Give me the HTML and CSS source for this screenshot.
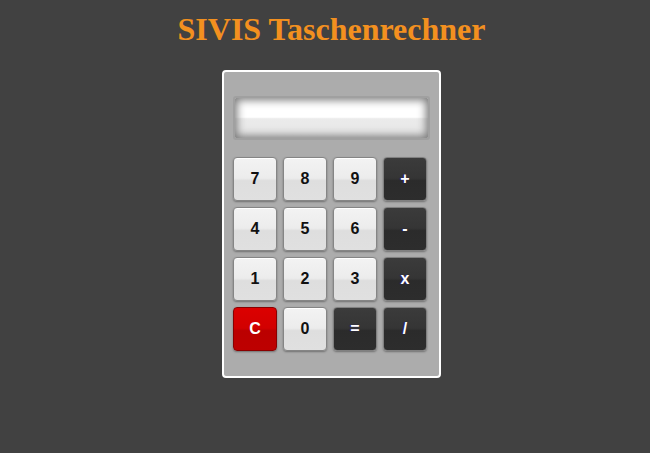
FILE: index.html
```html
<!DOCTYPE html>
<html lang="de">
<head>
<meta charset="utf-8">
<title>SIVIS Taschenrechner</title>
<link rel="stylesheet" href="styles.css">
</head>
<body>
<div class="page">
  <h1 class="title">SIVIS Taschenrechner</h1>
  <div class="calc">
    <input class="display" type="text" value="">
    <div class="keys">
      <button class="key light">7</button>
      <button class="key light">8</button>
      <button class="key light">9</button>
      <button class="key dark">+</button>
      <button class="key light">4</button>
      <button class="key light">5</button>
      <button class="key light">6</button>
      <button class="key dark">-</button>
      <button class="key light">1</button>
      <button class="key light">2</button>
      <button class="key light">3</button>
      <button class="key dark">x</button>
      <button class="key red">C</button>
      <button class="key light">0</button>
      <button class="key dark">=</button>
      <button class="key dark">/</button>
    </div>
  </div>
</div>
</body>
</html>
```
FILE: styles.css
```css
html, body {
  margin: 0;
  padding: 0;
  background: #414141;
  height: 100%;
}
.page {
  padding-left: 13px;
  display: flex;
  flex-direction: column;
  align-items: center;
}
.title {
  margin: 0;
  padding-top: 11px;
  font-family: "Liberation Serif", "Times New Roman", serif;
  font-weight: bold;
  font-size: 32px;
  line-height: 36px;
  color: #f3901f;
}
.calc {
  margin-top: 23px;
  width: 197px;
  padding: 24px 9px 25px 9px;
  background: #acacac;
  border: 2px solid #ffffff;
  border-radius: 4px;
}
.display {
  display: block;
  box-sizing: border-box;
  width: 197px;
  height: 44px;
  margin: 0;
  padding: 0 8px;
  border: 2px solid #a0a0a0;
  border-radius: 3px;
  background: linear-gradient(#ffffff 0%, #ffffff 48%, #ebebeb 52%, #e6e6e6 100%);
  box-shadow: inset 0 0 9px 2px #7a7a7a;
  outline: none;
  font-family: "Liberation Sans", Arial, sans-serif;
  font-size: 18px;
  text-align: right;
}
.keys {
  margin-top: 17px;
  display: grid;
  grid-template-columns: repeat(4, 44px);
  grid-auto-rows: 44px;
  gap: 6px;
}
.key {
  box-sizing: border-box;
  margin: 0;
  padding: 0;
  border-radius: 4px;
  font-family: "Liberation Sans", Arial, sans-serif;
  font-weight: bold;
  font-size: 16px;
  cursor: pointer;
  box-shadow: 0 1px 2px rgba(0, 0, 0, 0.35);
}
.light {
  color: #111111;
  border: 1px solid #858585;
  background: linear-gradient(#f3f3f3 0%, #ececec 48%, #dedede 54%, #e0e0e0 100%);
  box-shadow: inset 0 1px 0 #ffffff, 0 1px 2px rgba(0, 0, 0, 0.35);
}
.dark {
  color: #ffffff;
  border: 1px solid #808080;
  background: linear-gradient(#3b3b3b 0%, #353535 48%, #2b2b2b 54%, #2d2d2d 100%);
  text-shadow: -1px 0 1px #2a1a8a;
}
.red {
  color: #ffffff;
  border: 1px solid #8a0000;
  background: linear-gradient(#dc0000 0%, #d20000 48%, #bb0000 54%, #bd0000 100%);
}
```
